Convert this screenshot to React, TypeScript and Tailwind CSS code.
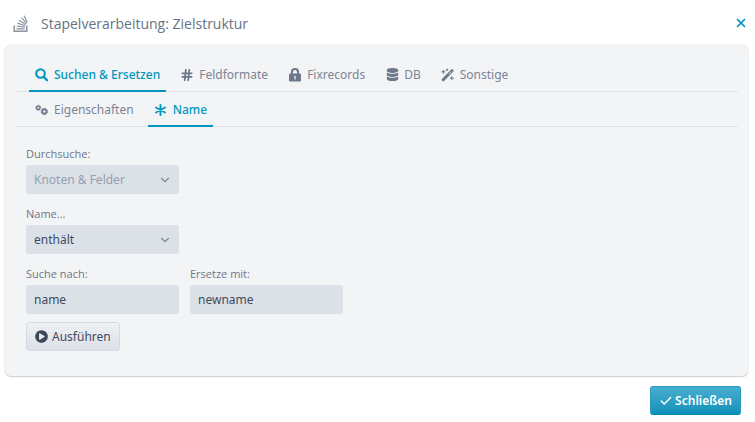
import { ReactNode, useState } from "react";
import clsx from "clsx";
import { Check, ChevronDown, Hash, X } from "lucide-react";
import { FaDatabase, FaPlayCircle } from "react-icons/fa";

function StackIcon() {
  return (
    <svg width="16" height="18" viewBox="0 0 16 18" fill="none" stroke="#8c949f" strokeWidth="1.2" aria-hidden="true">
      <path d="M1.2 10.5v5.8h12.6v-5.8" strokeWidth="1.5" />
      <path d="M3.5 13.8h8.2M3.6 11l8.3 1.1M4.4 8.1l7.8 2.6M6 5.2l6.8 4.2M8.5 2.7l5.1 5.7M11.2 .8l3 6.4" />
    </svg>
  );
}

function SearchIcon() {
  return (
    <svg width="14" height="14" viewBox="0 0 14 14" fill="none" stroke="currentColor" aria-hidden="true">
      <circle cx="5.5" cy="5.5" r="4.3" strokeWidth="2.1" />
      <path d="M8.8 8.8l3.2 3.4" strokeWidth="2.4" strokeLinecap="round" />
    </svg>
  );
}

function LockIcon() {
  return (
    <svg width="14" height="14" viewBox="0 0 14 14" fill="none" aria-hidden="true">
      <rect x="1" y="5.5" width="12" height="8" rx="1.2" fill="currentColor" />
      <path d="M3.9 6V4.2a3.1 3.1 0 0 1 6.2 0V6" stroke="currentColor" strokeWidth="2" />
      <path d="M7 8.3v2.6" stroke="#f3f4f6" strokeWidth="1.2" strokeLinecap="round" />
    </svg>
  );
}

function WandIcon() {
  return (
    <svg width="14" height="14" viewBox="0 0 14 14" fill="none" stroke="currentColor" aria-hidden="true">
      <path d="M2.2 11.8l8.9-9.1" strokeWidth="3" strokeLinecap="round" />
      <path d="M8 6.2l2.6-2.7" stroke="#f3f4f6" strokeWidth=".8" />
      <path d="M2.4 1.8v4M.4 3.8h4M10.8 8.2v4M8.8 10.2h4M6.1 .6v2.4M4.9 1.8h2.4" strokeWidth="1" />
    </svg>
  );
}

function GearsIcon() {
  return (
    <svg width="14" height="14" viewBox="0 0 14 14" fill="none" stroke="currentColor" aria-hidden="true">
      <circle cx="3.3" cy="4.8" r="1.7" strokeWidth="1.4" />
      <circle cx="3.3" cy="4.8" r="2.6" strokeWidth=".9" strokeDasharray="1.1 .94" />
      <circle cx="9.3" cy="8.5" r="2.1" strokeWidth="1.6" />
      <circle cx="9.3" cy="8.5" r="3.2" strokeWidth="1" strokeDasharray="1.4 1.11" />
    </svg>
  );
}

function AsteriskIcon() {
  return (
    <svg width="14" height="14" viewBox="0 0 14 14" stroke="currentColor" strokeWidth="1.9" strokeLinecap="round" aria-hidden="true">
      <path d="M6.5 2v10M2 4.5l9 5M11 4.5l-9 5" />
    </svg>
  );
}

type TabProps = {
  icon: ReactNode;
  label: string;
  active: boolean;
  onClick: () => void;
};

function Tab({ icon, label, active, onClick }: TabProps) {
  return (
    <button
      type="button"
      role="tab"
      aria-selected={active}
      onClick={onClick}
      className={clsx(
        "-mb-px flex h-[35px] items-center gap-[5px] border-b-2 px-1.5 pt-0.5 text-xs whitespace-nowrap",
        active
          ? "border-[#0097c0] font-medium text-[#0097c0]"
          : "border-transparent text-[#7a8595]"
      )}
    >
      <span className={clsx("flex w-3.5 justify-center", !active && "text-[#6c7889]")}>{icon}</span>
      {label}
    </button>
  );
}

type FieldProps = {
  id: string;
  label: string;
  children: ReactNode;
};

function Field({ id, label, children }: FieldProps) {
  return (
    <div className="w-[153px]">
      <label htmlFor={id} className="block h-5 font-['Open_Sans',sans-serif] text-[11px] leading-[18px] text-[#6b7787]">
        {label}
      </label>
      {children}
    </div>
  );
}

const inputClass =
  "block h-[29px] w-full appearance-none rounded-[3px] bg-[#dce1e8] px-2 text-xs text-[#3f4b5d] outline-none disabled:text-[#959eac] disabled:opacity-100";

const chevronClass = "pointer-events-none absolute top-2 right-[7px] text-[#7f8a9a]";

const mainTabs = [
  { label: "Suchen & Ersetzen", icon: <SearchIcon /> },
  { label: "Feldformate", icon: <Hash size={14} strokeWidth={3} /> },
  { label: "Fixrecords", icon: <LockIcon /> },
  { label: "DB", icon: <FaDatabase size={13} /> },
  { label: "Sonstige", icon: <WandIcon /> },
];

const subTabs = [
  { label: "Eigenschaften", icon: <GearsIcon /> },
  { label: "Name", icon: <AsteriskIcon /> },
];

export default function App() {
  const [mainTab, setMainTab] = useState(0);
  const [subTab, setSubTab] = useState(1);

  return (
    <div className="bg-white pr-[7px] pl-[5px] font-['Noto_Sans',sans-serif]">
      <header className="flex h-[45px] items-center justify-between pl-2">
        <h1 className="flex items-center gap-3 pt-0.5 font-['Open_Sans',sans-serif] text-sm text-[#677282]">
          <StackIcon />
          Stapelverarbeitung: Zielstruktur
        </h1>
        <button type="button" aria-label="Fenster schließen" className="text-[#0097c0]">
          <X size={14} strokeWidth={3} />
        </button>
      </header>

      <main className="rounded-md bg-[#f3f4f6] px-2.5 pt-3 pb-[25px] shadow-[0_0_2px_#cbd1d8,0_1px_1px_#cbd1d8]">
        <div role="tablist" className="flex gap-2 border-b border-[#dfe2e6] pl-3.5">
          {mainTabs.map((t, i) => (
            <Tab key={t.label} {...t} active={i === mainTab} onClick={() => setMainTab(i)} />
          ))}
        </div>
        <div role="tablist" className="flex gap-2 border-b border-[#dfe2e6] pl-3.5">
          {subTabs.map((t, i) => (
            <Tab key={t.label} {...t} active={i === subTab} onClick={() => setSubTab(i)} />
          ))}
        </div>

        <form className="px-[11px] pt-[18px]" onSubmit={(e) => e.preventDefault()}>
          <div className="flex flex-col gap-[11px]">
            <Field id="scope" label="Durchsuche:">
              <div className="relative">
                <select id="scope" disabled className={inputClass}>
                  <option>Knoten &amp; Felder</option>
                </select>
                <ChevronDown size={14} className={chevronClass} />
              </div>
            </Field>
            <Field id="mode" label="Name...">
              <div className="relative">
                <select id="mode" className={inputClass}>
                  <option>enthält</option>
                </select>
                <ChevronDown size={14} className={chevronClass} />
              </div>
            </Field>
            <div className="flex gap-[11px]">
              <Field id="search" label="Suche nach:">
                <input id="search" defaultValue="name" className={inputClass} />
              </Field>
              <Field id="replace" label="Ersetze mit:">
                <input id="replace" defaultValue="newname" className={inputClass} />
              </Field>
            </div>
          </div>
          <button
            type="submit"
            className="mt-2 flex h-[29px] items-center gap-1 rounded-[3px] border border-[#d3dae2] bg-linear-to-b from-[#eef0f3] to-[#dce1e8] px-2 text-xs text-[#3f4b5d]"
          >
            <FaPlayCircle size={13} className="text-[#3c485a]" />
            Ausführen
          </button>
        </form>
      </main>

      <footer className="flex justify-end pt-2.5 pr-[7px]">
        <button
          type="button"
          className="flex h-[29px] items-center gap-0.5 rounded-[3px] border border-[#2a9cbf] border-b-[#0788b0] bg-linear-to-b from-[#46afd0] to-[#0a90ba] px-2 text-xs font-semibold text-white"
        >
          <Check size={14} strokeWidth={2.5} />
          Schließen
        </button>
      </footer>
    </div>
  );
}
